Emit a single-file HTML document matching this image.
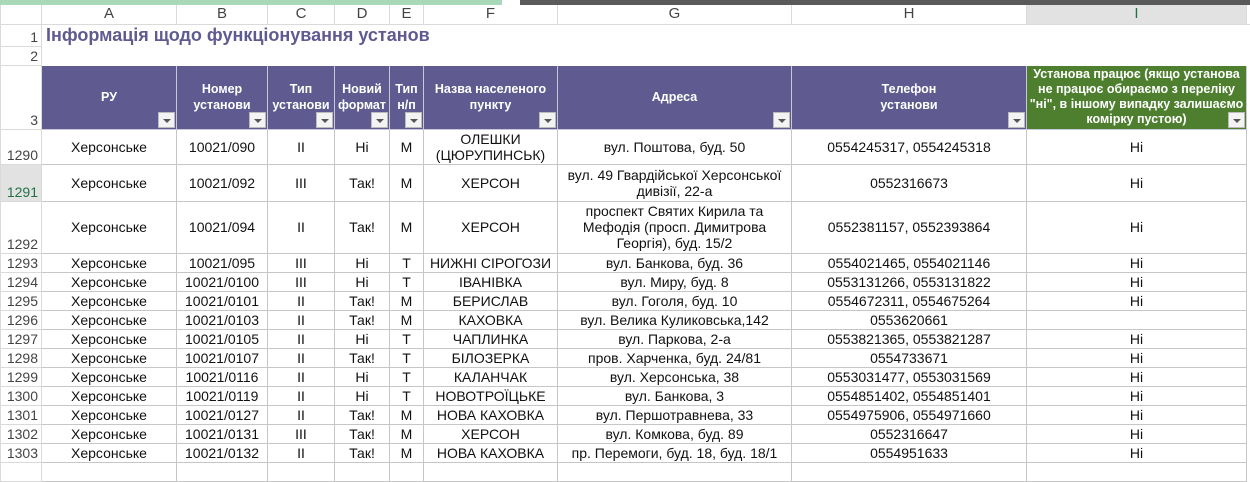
<!DOCTYPE html>
<html><head><meta charset="utf-8"><style>
body{margin:0;width:1250px;height:465px;overflow:hidden;background:#fff;font-family:"Liberation Sans",Arial,sans-serif;position:relative}
.top{position:absolute;left:0;top:0;height:5px;width:1250px;background:#5a5a5a}
.top i{position:absolute;left:0;top:0;height:5px;width:502px;background:#a9d8b8}
.top b{position:absolute;left:502px;top:0;height:5px;width:18px;background:#fff}
table{position:absolute;left:0;top:5px;border-collapse:collapse;table-layout:fixed;width:1250px}
td{padding:0 2px;font-size:14px;color:#111;text-align:center;vertical-align:middle;border:1px solid #c6c6c6;line-height:16px;overflow:hidden;white-space:nowrap}
td.w{white-space:normal}
td.rh{text-align:right;vertical-align:bottom;color:#444;font-size:14px;padding:0 3px 0 0;border-color:#dadada;background:#fff;line-height:18px}
tr.ch td{font-size:15px;color:#444;border-color:#dadada;border-top:none;line-height:18px}
tr.plain td{border-left-color:#fff;border-right-color:#fff;border-top-color:#fff;border-bottom-color:#fff}
tr.plain td.rh{border-color:#dadada}
.h{background:#5f5b91;color:#fff;font-weight:bold;font-size:12.5px;line-height:16px;position:relative;border:1.5px solid #c8c8d8;white-space:normal}
.g{background:#4e7f2f;font-size:12.5px;line-height:15px;padding:0 1px}
.dd{position:absolute;right:1px;bottom:1px;width:17px;height:16px;background:#f3f3f3;border:1px solid #bbb;box-sizing:border-box}
.dd:after{content:"";position:absolute;left:4px;top:6px;border-left:4px solid transparent;border-right:4px solid transparent;border-top:4px solid #555}
.title{font-size:18px;font-weight:bold;color:#5f5b91;text-align:left;padding-left:4px;white-space:nowrap;overflow:visible}
</style></head><body>
<div class="top"><i></i><b></b></div>
<table>
<colgroup><col style="width:41px"><col style="width:135px"><col style="width:91px"><col style="width:67px"><col style="width:55px"><col style="width:34px"><col style="width:134px"><col style="width:234px"><col style="width:235px"><col style="width:220px"><col style="width:4px"></colgroup>
<tr class="ch" style="height:19px"><td style="background:#fff"></td><td>A</td><td>B</td><td>C</td><td>D</td><td>E</td><td>F</td><td>G</td><td>H</td><td style="background:#e2e2e2;color:#217346">I</td><td></td></tr>
<tr class="plain" style="height:22px"><td class="rh">1</td><td class="title" colspan="9">Інформація щодо функціонування установ</td><td></td></tr>
<tr class="plain" style="height:19px"><td class="rh">2</td><td colspan="10"></td></tr>
<tr style="height:64px"><td class="rh">3</td>
<td class="h">РУ<span class="dd"></span></td>
<td class="h">Номер<br>установи<span class="dd"></span></td>
<td class="h">Тип<br>установи<span class="dd"></span></td>
<td class="h">Новий<br>формат<span class="dd"></span></td>
<td class="h">Тип<br>н/п<span class="dd"></span></td>
<td class="h">Назва населеного<br>пункту<span class="dd"></span></td>
<td class="h">Адреса<span class="dd"></span></td>
<td class="h">Телефон<br>установи<span class="dd"></span></td>
<td class="h g">Установа працює (якщо установа не працює обираємо з переліку "ні", в іншому випадку залишаємо комірку пустою)<span class="dd"></span></td><td style="border:none"></td></tr>
<tr style="height:35px"><td class="rh">1290</td><td>Херсонське</td><td>10021/090</td><td>II</td><td>Ні</td><td>М</td><td class="w">ОЛЕШКИ (ЦЮРУПИНСЬК)</td><td>вул. Поштова, буд. 50</td><td>0554245317, 0554245318</td><td>Ні</td><td style="border:none"></td></tr>
<tr style="height:37px"><td class="rh" style="background:#e2e2e2;color:#217346">1291</td><td>Херсонське</td><td>10021/092</td><td>III</td><td>Так!</td><td>М</td><td>ХЕРСОН</td><td class="w">вул. 49 Гвардійської Херсонської дивізії, 22-а</td><td>0552316673</td><td>Ні</td><td style="border:none"></td></tr>
<tr style="height:52px"><td class="rh">1292</td><td>Херсонське</td><td>10021/094</td><td>II</td><td>Так!</td><td>М</td><td>ХЕРСОН</td><td class="w">проспект Святих Кирила та Мефодія (просп. Димитрова Георгія), буд. 15/2</td><td>0552381157, 0552393864</td><td>Ні</td><td style="border:none"></td></tr>
<tr style="height:19px"><td class="rh">1293</td><td>Херсонське</td><td>10021/095</td><td>III</td><td>Ні</td><td>Т</td><td>НИЖНІ СІРОГОЗИ</td><td>вул. Банкова, буд. 36</td><td>0554021465, 0554021146</td><td>Ні</td><td style="border:none"></td></tr>
<tr style="height:19px"><td class="rh">1294</td><td>Херсонське</td><td>10021/0100</td><td>III</td><td>Ні</td><td>Т</td><td>ІВАНІВКА</td><td>вул. Миру, буд. 8</td><td>0553131266, 0553131822</td><td>Ні</td><td style="border:none"></td></tr>
<tr style="height:19px"><td class="rh">1295</td><td>Херсонське</td><td>10021/0101</td><td>II</td><td>Так!</td><td>М</td><td>БЕРИСЛАВ</td><td>вул. Гоголя, буд. 10</td><td>0554672311, 0554675264</td><td>Ні</td><td style="border:none"></td></tr>
<tr style="height:19px"><td class="rh">1296</td><td>Херсонське</td><td>10021/0103</td><td>II</td><td>Так!</td><td>М</td><td>КАХОВКА</td><td>вул. Велика Куликовська,142</td><td>0553620661</td><td></td><td style="border:none"></td></tr>
<tr style="height:19px"><td class="rh">1297</td><td>Херсонське</td><td>10021/0105</td><td>II</td><td>Ні</td><td>Т</td><td>ЧАПЛИНКА</td><td>вул. Паркова, 2-а</td><td>0553821365, 0553821287</td><td>Ні</td><td style="border:none"></td></tr>
<tr style="height:19px"><td class="rh">1298</td><td>Херсонське</td><td>10021/0107</td><td>II</td><td>Так!</td><td>Т</td><td>БІЛОЗЕРКА</td><td>пров. Харченка, буд. 24/81</td><td>0554733671</td><td>Ні</td><td style="border:none"></td></tr>
<tr style="height:19px"><td class="rh">1299</td><td>Херсонське</td><td>10021/0116</td><td>II</td><td>Ні</td><td>Т</td><td>КАЛАНЧАК</td><td>вул. Херсонська, 38</td><td>0553031477, 0553031569</td><td>Ні</td><td style="border:none"></td></tr>
<tr style="height:19px"><td class="rh">1300</td><td>Херсонське</td><td>10021/0119</td><td>II</td><td>Ні</td><td>Т</td><td>НОВОТРОЇЦЬКЕ</td><td>вул. Банкова, 3</td><td>0554851402, 0554851401</td><td>Ні</td><td style="border:none"></td></tr>
<tr style="height:19px"><td class="rh">1301</td><td>Херсонське</td><td>10021/0127</td><td>II</td><td>Так!</td><td>М</td><td>НОВА КАХОВКА</td><td>вул. Першотравнева, 33</td><td>0554975906, 0554971660</td><td>Ні</td><td style="border:none"></td></tr>
<tr style="height:19px"><td class="rh">1302</td><td>Херсонське</td><td>10021/0131</td><td>III</td><td>Так!</td><td>М</td><td>ХЕРСОН</td><td>вул. Комкова, буд. 89</td><td>0552316647</td><td>Ні</td><td style="border:none"></td></tr>
<tr style="height:19px"><td class="rh">1303</td><td>Херсонське</td><td>10021/0132</td><td>II</td><td>Так!</td><td>М</td><td>НОВА КАХОВКА</td><td>пр. Перемоги, буд. 18, буд. 18/1</td><td>0554951633</td><td>Ні</td><td style="border:none"></td></tr>
<tr style="height:19px"><td class="rh"></td><td></td><td></td><td></td><td></td><td></td><td></td><td></td><td></td><td></td><td style="border:none"></td></tr>
</table>
</body></html>
